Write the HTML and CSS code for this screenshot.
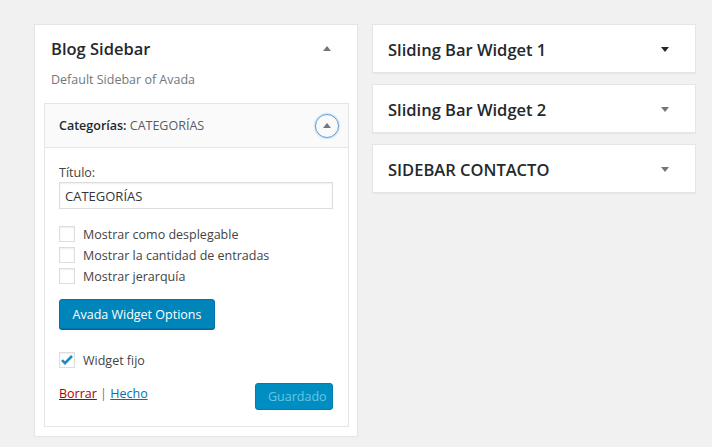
FILE: index.html
```html
<!DOCTYPE html>
<html lang="es">
<head>
    <meta charset="utf-8">
    <title>Widgets</title>
    <link rel="stylesheet" href="styles.css">
</head>
<body>
    <div class="areas">
        <div class="col">
            <div class="sidebar open">
                <div class="sidebar-name">
                    <h2>Blog Sidebar</h2>
                    <span class="arrow up"></span>
                </div>
                <p class="desc">Default Sidebar of Avada</p>

                <div class="widget">
                    <div class="widget-top">
                        <h3>Categorías: <span class="in-title">CATEGORÍAS</span></h3>
                        <span class="toggle"><span class="arrow up"></span></span>
                    </div>
                    <div class="widget-inside">
                        <label class="lbl" for="titulo">Título:</label>
                        <input id="titulo" class="field" type="text" value="CATEGORÍAS">

                        <div class="checks">
                            <label class="check"><span class="box"></span>Mostrar como desplegable</label>
                            <label class="check"><span class="box"></span>Mostrar la cantidad de entradas</label>
                            <label class="check"><span class="box"></span>Mostrar jerarquía</label>
                        </div>

                        <button class="btn primary">Avada Widget Options</button>

                        <label class="check fixed">
                            <span class="box">
                                <svg width="16" height="16" viewBox="0 0 16 16"><path d="M3 8.2l3 3L13 4" fill="none" stroke="#1e8cbe" stroke-width="2.6"/></svg>
                            </span>Widget fijo
                        </label>

                        <div class="actions">
                            <div class="links"><a href="#" class="del">Borrar</a> | <a href="#" class="done">Hecho</a></div>
                            <button class="btn saved" disabled>Guardado</button>
                        </div>
                    </div>
                </div>
            </div>
        </div>

        <div class="col">
            <div class="sidebar closed">
                <div class="sidebar-name">
                    <h2>Sliding Bar Widget 1</h2>
                    <span class="arrow down dark"></span>
                </div>
            </div>
            <div class="sidebar closed">
                <div class="sidebar-name">
                    <h2>Sliding Bar Widget 2</h2>
                    <span class="arrow down"></span>
                </div>
            </div>
            <div class="sidebar closed">
                <div class="sidebar-name">
                    <h2>SIDEBAR CONTACTO</h2>
                    <span class="arrow down"></span>
                </div>
            </div>
        </div>
    </div>
</body>
</html>
```

FILE: styles.css
```css
body {
    margin: 0;
    background-color: #f1f1f1;
    font-family: 'Open Sans', sans-serif;
    color: #23282d;
}

.areas {
    display: flex;
    gap: 14px;
    padding: 24px 0 0 34px;
}

.col {
    width: 324px;
}

.sidebar {
    background-color: #fff;
    border: 1px solid #e5e5e5;
    box-shadow: 0 1px 1px rgba(0, 0, 0, 0.04);
    box-sizing: border-box;
}

.sidebar.open {
    padding-bottom: 9px;
}

.sidebar.closed {
    height: 49px;
    margin-bottom: 11px;
}

.sidebar-name {
    display: flex;
    align-items: center;
    justify-content: space-between;
    height: 49px;
    padding: 0 26px 0 15px;
}

.open .sidebar-name {
    height: 47px;
    padding-left: 16px;
    padding-right: 26px;
}

h2 {
    margin: 0;
    font-size: 16.5px;
    font-weight: 600;
    color: #23282d;
}

.arrow {
    width: 0;
    height: 0;
    border-left: 4px solid transparent;
    border-right: 4px solid transparent;
}

.arrow.up {
    border-bottom: 5px solid #72777c;
}

.arrow.down {
    border-top: 5px solid #72777c;
}

.arrow.dark {
    border-top-color: #23282d;
}

.desc {
    margin: 0 0 15px 16px;
    font-size: 12.5px;
    color: #72777c;
    line-height: 16px;
}

.widget {
    margin: 0 8px 0 9px;
    border: 1px solid #e5e5e5;
    background-color: #fff;
}

.widget-top {
    display: flex;
    align-items: center;
    justify-content: space-between;
    height: 43px;
    padding: 0 9px 0 14px;
    background-color: #fafafa;
    border-bottom: 1px solid #e5e5e5;
}

h3 {
    margin: 0;
    font-size: 12.5px;
    font-weight: 600;
    color: #23282d;
}

.in-title {
    font-weight: 400;
    color: #555d66;
}

.toggle {
    display: flex;
    align-items: center;
    justify-content: center;
    width: 22px;
    height: 22px;
    border: 1.5px solid #5b9dd9;
    border-radius: 50%;
    box-shadow: 0 0 2px rgba(30, 140, 190, 0.6);
}

.toggle .arrow.up {
    border-bottom-color: #72777c;
    margin-top: -1px;
}

.widget-inside {
    padding: 17px 14px 16px 14px;
    font-size: 12.5px;
    color: #444;
}

.lbl {
    display: block;
    line-height: 16px;
    margin-bottom: 1px;
}

.field {
    display: block;
    box-sizing: border-box;
    width: 274px;
    height: 27px;
    padding: 0 5px;
    border: 1px solid #ddd;
    box-shadow: inset 0 1px 2px rgba(0, 0, 0, 0.07);
    font-family: 'Open Sans', sans-serif;
    font-size: 13px;
    color: #32373c;
}

.checks {
    margin-top: 17px;
}

.check {
    display: flex;
    align-items: center;
    height: 16px;
    margin-bottom: 5px;
    color: #444;
}

.box {
    display: inline-block;
    box-sizing: border-box;
    width: 16px;
    height: 16px;
    margin-right: 8px;
    border: 1px solid #ddd;
    box-shadow: inset 0 1px 2px rgba(0, 0, 0, 0.07);
}

.box svg {
    display: block;
    margin: -1px;
}

.btn {
    font-family: 'Open Sans', sans-serif;
    font-size: 12.5px;
    border-radius: 3px;
    padding: 0 12px;
}

.primary {
    display: block;
    margin-top: 15px;
    height: 30px;
    width: 156px;
    background-color: #0085ba;
    border: 1px solid #0073aa;
    box-shadow: 0 1px 0 #006799;
    color: #fff;
}

.check.fixed {
    margin-top: 23px;
}

.actions {
    display: flex;
    justify-content: space-between;
    align-items: flex-start;
    margin-top: 15px;
}

.links {
    padding-top: 2px;
    color: #72777c;
}

.del {
    color: #a00;
}

.done {
    color: #0073aa;
}

.saved {
    height: 27px;
    width: 78px;
    margin-right: 1px;
    background-color: #008ec2;
    border: 1px solid #007cb2;
    color: #66c6e4;
}
```
